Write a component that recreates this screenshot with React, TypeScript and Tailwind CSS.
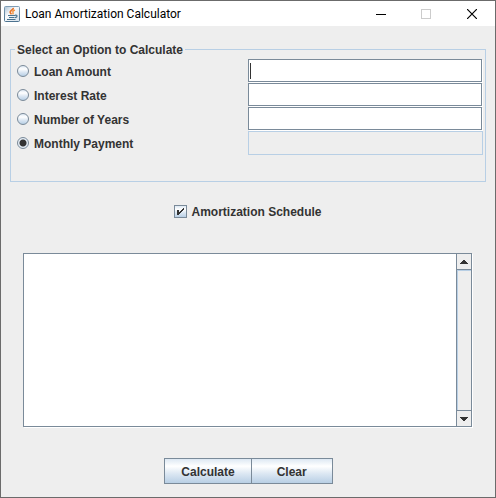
import React, { useState } from "react";

const OPTIONS = ["Loan Amount", "Interest Rate", "Number of Years", "Monthly Payment"];

const METAL =
  "border border-[#7a8a99] bg-[linear-gradient(#dde8f3,#fff_30%,#dde8f3_60%,#b8cfe5)]";

function JavaIcon() {
  return (
    <svg width="16" height="16" viewBox="0 0 16 16" aria-hidden="true">
      <defs>
        <linearGradient id="edge" x1="0" y1="0" x2="0" y2="1">
          <stop offset="0" stopColor="#7f9db5" />
          <stop offset="1" stopColor="#4d7390" />
        </linearGradient>
        <linearGradient id="tile" x1="0" y1="0" x2="1" y2="1">
          <stop offset="0" stopColor="#a9c0d3" />
          <stop offset="0.4" stopColor="#f8fafc" />
          <stop offset="1" stopColor="#d5e0e9" />
        </linearGradient>
      </defs>
      <rect x="0.5" y="0.5" width="15" height="15" rx="1" fill="url(#tile)" stroke="url(#edge)" />
      <path d="M9.300 1.800C9.600 4 5.600 4.600 6.200 6.400c.3.800.9 1 1 2" fill="none" stroke="#e8762c" strokeWidth="1.700" />
      <path d="M11 4.200C8.900 4.800 8.400 5.600 9 6.500c.3.500.2 1.100-.4 1.900" fill="none" stroke="#f0913c" strokeWidth="1.400" />
      <path d="M4 9.500h7M5 11.500h5.500M3 13.500h8.500" fill="none" stroke="#47738f" strokeWidth="1.200" />
      <path d="M11 9.300c2.600-.7 2.800 1.600 0 2.400" fill="none" stroke="#47738f" strokeWidth="1.200" />
    </svg>
  );
}

function TitleBar() {
  return (
    <header className="flex h-[25px] items-center bg-white pl-[3px] text-black">
      <JavaIcon />
      <h1 className="ml-[5px] flex-1 font-['Roboto','Noto_Sans',sans-serif] text-[12px] leading-4 font-normal">
        Loan Amortization Calculator
      </h1>
      <button type="button" aria-label="Minimize" className="flex h-full w-[45px] items-center justify-center">
        <svg width="10" height="10" shapeRendering="crispEdges">
          <rect y="5" width="10" height="1" fill="#000" />
        </svg>
      </button>
      <button type="button" aria-label="Maximize" disabled className="flex h-full w-[45px] items-center justify-center">
        <svg width="10" height="10">
          <rect x="0.5" y="0.5" width="9" height="9" fill="none" stroke="#ccc" />
        </svg>
      </button>
      <button type="button" aria-label="Close" className="flex h-full w-[47px] items-center justify-center">
        <svg width="10" height="10">
          <path d="M0 0L10 10M10 0L0 10" stroke="#000" strokeWidth="1.200" />
        </svg>
      </button>
    </header>
  );
}

function ScrollButton({ label, up }: { label: string; up?: boolean }) {
  return (
    <button
      type="button"
      aria-label={label}
      className={`flex w-full items-center justify-center border-[#7a8a99] bg-[#eeeeee] ${up ? "h-4 border-b" : "h-4 border-t"}`}
    >
      <svg width="8" height="4" shapeRendering="crispEdges" fill="#333">
        {up ? (
          <path d="M3 0h2v1h1v1h1v1h1v1H0V3h1V2h1V1h1z" />
        ) : (
          <path d="M0 0h8v1H7v1H6v1H5v1H3V3H2V2H1V1H0z" />
        )}
      </svg>
    </button>
  );
}

export default function App() {
  const [selected, setSelected] = useState(3);
  const [schedule, setSchedule] = useState(true);
  const [focused, setFocused] = useState(0);

  return (
    <div className="flex min-h-screen flex-col border border-[#6b6b6b] bg-[#eeeeee] font-['Liberation_Sans',Arial,sans-serif] text-[12px] leading-4 font-bold text-[#333333]">
      <TitleBar />
      <main className="flex flex-1 flex-col pt-[14px] pb-[13px]">
        <fieldset className="mx-[9px] border border-[#b8cfe5] px-[2px] pb-[26px]">
          <legend className="ml-[2px] px-[2px] pt-[2px]">Select an Option to Calculate</legend>
          {OPTIONS.map((name, i) => (
            <div key={name} className="grid h-6 grid-cols-2 items-start first-of-type:mt-px">
              <label className="flex h-full items-center gap-[5px] pl-1">
                <input
                  type="radio"
                  name="option"
                  checked={selected === i}
                  onChange={() => setSelected(i)}
                  className={`size-3 appearance-none rounded-full ${METAL} checked:bg-[radial-gradient(circle,#333_3px,#e4edf6_4px)]`}
                />
                <span className="pt-[2px]">{name}</span>
              </label>
              {selected === i ? (
                <input
                  disabled
                  aria-label={`${name} value`}
                  className="h-6 w-full border border-[#b8cfe5] bg-[#eeeeee] px-1"
                />
              ) : (
                <div className="relative pr-px">
                  <input
                    aria-label={`${name} value`}
                    onFocus={() => setFocused(i)}
                    className="block h-[23px] w-full border border-[#7a8a99] bg-white px-1 font-normal caret-transparent shadow-[1px_1px_0_#fff] outline-none"
                  />
                  {focused === i && <span className="absolute top-1 left-[2px] h-4 w-px bg-[#333333]" />}
                </div>
              )}
            </div>
          ))}
        </fieldset>

        <label className="mt-[20px] flex h-[18px] items-center justify-center gap-1">
          <span className="relative flex">
            <input
              type="checkbox"
              checked={schedule}
              onChange={() => setSchedule(!schedule)}
              className={`size-[13px] appearance-none ${METAL}`}
            />
            {schedule && (
              <svg className="pointer-events-none absolute inset-0" width="13" height="13" shapeRendering="crispEdges" fill="#333">
                <path d="M3 5h2v2h1V6h1V5h1V4h1V3h1v2H9v1H8v1H7v1H6v1H5v1H3z" />
              </svg>
            )}
          </span>
          <span className="pt-[2px]">Amortization Schedule</span>
        </label>

        <div className="mr-[23px] ml-[22px] mt-[33px] flex flex-1 border border-[#7a8a99] bg-white shadow-[1px_1px_0_#fff]">
          <textarea
            aria-label="Schedule output"
            className="block min-h-[160px] min-w-0 flex-1 resize-none overflow-hidden bg-white px-1 font-normal outline-none"
          />
          <div className="flex w-[15px] flex-col border-l border-[#7a8a99] bg-[#eeeeee]">
            <ScrollButton up label="Scroll up" />
            <div className="flex-1 border-t border-l border-[#b8cfe5]" />
            <ScrollButton label="Scroll down" />
          </div>
        </div>

        <div className="mt-[31px] flex justify-center pl-px">
          <button type="button" className={`h-[26px] px-4 pt-px leading-4 ${METAL}`}>
            Calculate
          </button>
          <button type="button" className={`-ml-px h-[26px] px-[25px] pt-px leading-4 ${METAL}`}>
            Clear
          </button>
        </div>
      </main>
    </div>
  );
}
